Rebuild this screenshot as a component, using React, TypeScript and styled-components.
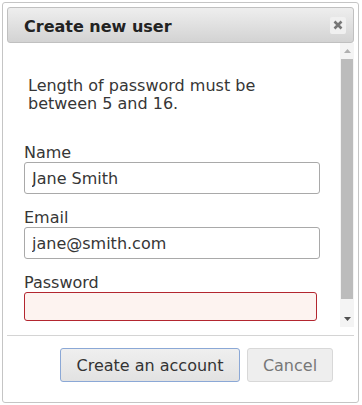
import styled, { createGlobalStyle } from "styled-components";

const GlobalStyle = createGlobalStyle`
  body {
    margin: 0;
    background: #fff;
    font-family: "DejaVu Sans", Verdana, sans-serif;
    font-size: 16px;
    color: #363636;
  }
`;

const Dialog = styled.div`
  box-sizing: border-box;
  width: 357px;
  height: 401px;
  margin: 2px 0 0 2px;
  padding: 4px;
  border: 1px solid #c5c5c5;
  border-radius: 3px;
  background: #fff;
  display: flex;
  flex-direction: column;
`;

const TitleBar = styled.div`
  box-sizing: border-box;
  height: 36px;
  padding: 2px 7px 0 16px;
  border: 1px solid #c0c0c0;
  border-radius: 3px;
  background: linear-gradient(#eeeeee, #d3d3d3);
  display: flex;
  align-items: center;
  justify-content: space-between;
`;

const Title = styled.span`
  font-weight: bold;
  color: #222;
`;

const CloseButton = styled.button`
  width: 16px;
  height: 17px;
  padding: 0;
  margin-top: -2px;
  border: none;
  border-radius: 2px;
  background: #f0f0f0;
  display: flex;
  align-items: center;
  justify-content: center;
`;

const Body = styled.div`
  height: 292px;
  display: flex;
`;

const Form = styled.form`
  flex: 1;
  padding: 34px 0 0 17px;
`;

const Tip = styled.p`
  margin: 0 0 31px 4px;
  line-height: 18px;
`;

const Field = styled.div`
  margin-bottom: 15px;
`;

const Label = styled.label`
  display: block;
  line-height: 18px;
`;

const Input = styled.input<{ $invalid?: boolean; $w: number; $h: number }>`
  box-sizing: border-box;
  display: block;
  width: ${(p) => p.$w}px;
  height: ${(p) => p.$h}px;
  padding: 0 7px;
  font: inherit;
  color: #363636;
  border: 1px solid ${(p) => (p.$invalid ? "#b3262f" : "#a9a9a9")};
  border-radius: 3px;
  background: ${(p) => (p.$invalid ? "#fdf3f0" : "#fff")};
  outline: none;
`;

const ScrollBar = styled.div`
  width: 14px;
  height: 284px;
  background: #f4f4f4;
  display: flex;
  flex-direction: column;
`;

const ScrollArrow = styled.div`
  height: 16px;
  display: flex;
  align-items: center;
  justify-content: center;
`;

const Track = styled.div`
  flex: 1;
`;

const Thumb = styled.div`
  height: 240px;
  margin: 0 1px;
  background: #bcbcbc;
`;

const ButtonPane = styled.div`
  border-top: 1px solid #d4d4d4;
  padding: 12px 21px 0 0;
  display: flex;
  justify-content: flex-end;
  gap: 7px;
`;

const Button = styled.button<{ $primary?: boolean; $w: number }>`
  box-sizing: border-box;
  width: ${(p) => p.$w}px;
  height: 34px;
  padding: 0;
  font: inherit;
  color: ${(p) => (p.$primary ? "#333" : "#777")};
  border: 1px solid ${(p) => (p.$primary ? "#8ba8d6" : "#d8d8d8")};
  border-radius: 3px;
  background: ${(p) =>
    p.$primary ? "linear-gradient(#efefef, #e2e2e2)" : "#eeeeee"};
`;

function Arrow({ up, color }: { up?: boolean; color: string }) {
  return (
    <svg width="7" height="4" viewBox="0 0 7 4">
      <path d={up ? "M0 4 L3.5 0 L7 4 Z" : "M0 0 L3.5 4 L7 0 Z"} fill={color} />
    </svg>
  );
}

export default function App() {
  return (
    <>
      <GlobalStyle />
      <Dialog>
        <TitleBar>
          <Title>Create new user</Title>
          <CloseButton type="button" aria-label="close">
            <svg width="10" height="10" viewBox="0 0 10 10">
              <path d="M1.5 1.5 L8.5 8.5 M8.5 1.5 L1.5 8.5" stroke="#777" strokeWidth="2.6" />
            </svg>
          </CloseButton>
        </TitleBar>
        <Body>
          <Form>
            <Tip>
              Length of password must be
              <br />
              between 5 and 16.
            </Tip>
            <Field>
              <Label>Name</Label>
              <Input $w={296} $h={32} defaultValue="Jane Smith" />
            </Field>
            <Field>
              <Label>Email</Label>
              <Input $w={296} $h={32} defaultValue="jane@smith.com" />
            </Field>
            <Field>
              <Label>Password</Label>
              <Input $w={293} $h={29} $invalid type="password" />
            </Field>
          </Form>
          <ScrollBar>
            <ScrollArrow>
              <Arrow up color="#b0b0b0" />
            </ScrollArrow>
            <Track>
              <Thumb />
            </Track>
            <ScrollArrow>
              <Arrow color="#505050" />
            </ScrollArrow>
          </ScrollBar>
        </Body>
        <ButtonPane>
          <Button type="button" $primary $w={180}>
            Create an account
          </Button>
          <Button type="button" $w={86}>
            Cancel
          </Button>
        </ButtonPane>
      </Dialog>
    </>
  );
}
